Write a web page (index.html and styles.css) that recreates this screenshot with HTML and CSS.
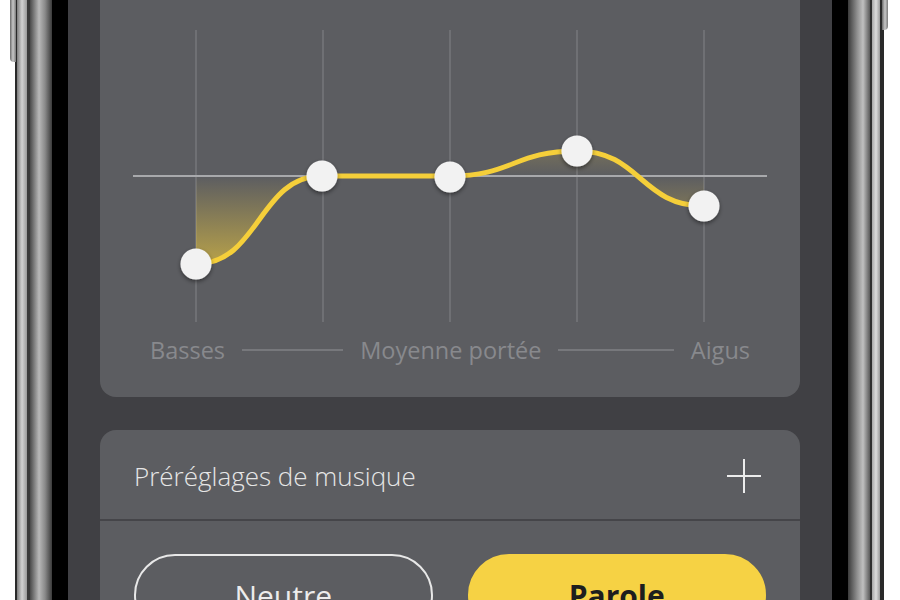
FILE: index.html
```html
<!DOCTYPE html>
<html lang="fr">
<head>
  <meta charset="UTF-8" />
  <meta name="viewport" content="width=device-width, initial-scale=1.0" />
  <title>Égaliseur</title>
  <link rel="stylesheet" href="styles.css">
</head>
<body>
  <div class="phone">
    <span class="side-btn side-left"></span>
    <span class="side-btn side-right"></span>
    <div class="screen">
      <!-- Egaliseur -->
      <div class="card eq-card">
        <svg class="eq-graph" width="700" height="330" viewBox="100 0 700 330">
          <defs>
            <linearGradient id="eqFill" gradientUnits="userSpaceOnUse" x1="0" y1="120" x2="0" y2="270">
              <stop offset="0" stop-color="#f5cf3a" stop-opacity="0.35" />
              <stop offset="0.373" stop-color="#f5cf3a" stop-opacity="0" />
              <stop offset="0.96" stop-color="#f5cf3a" stop-opacity="0.6" />
            </linearGradient>
            <filter id="knobShadow" x="-50%" y="-50%" width="200%" height="200%">
              <feDropShadow dx="0" dy="2" stdDeviation="2.2" flood-color="#000" flood-opacity="0.45" />
            </filter>
          </defs>
          <g stroke="#76777b" stroke-width="1.5">
            <line x1="196" y1="30" x2="196" y2="322" />
            <line x1="323" y1="30" x2="323" y2="322" />
            <line x1="450" y1="30" x2="450" y2="322" />
            <line x1="577" y1="30" x2="577" y2="322" />
            <line x1="704" y1="30" x2="704" y2="322" />
          </g>
          <line x1="133" y1="176" x2="767" y2="176" stroke="#a8a9ac" stroke-width="2" />
          <path d="M196,176 L196,264 C259,264 259,176 322,176 L450,176 C513,176 514,151 577,151 C640,151 641,206 704,206 L704,176 Z" fill="url(#eqFill)" />
          <path d="M196,264 C259,264 259,176 322,176 L450,176 C513,176 514,151 577,151 C640,151 641,206 704,206" fill="none" stroke="#f5cf3a" stroke-width="5" stroke-linecap="round" />
          <g fill="#f2f2f2" filter="url(#knobShadow)">
            <circle cx="196" cy="264" r="15.5" />
            <circle cx="322" cy="176" r="15.5" />
            <circle cx="450" cy="177" r="15.5" />
            <circle cx="577" cy="151" r="15.5" />
            <circle cx="704" cy="206" r="15.5" />
          </g>
        </svg>
        <div class="eq-labels">
          <span>Basses</span>
          <span class="eq-rule"></span>
          <span>Moyenne portée</span>
          <span class="eq-rule eq-rule-wide"></span>
          <span>Aigus</span>
        </div>
      </div>

      <!-- Préréglages -->
      <div class="card presets">
        <div class="presets-head">
          <span>Préréglages de musique</span>
          <svg class="plus" width="34" height="34" viewBox="0 0 34 34">
            <path d="M17 0 V34 M0 17 H34" stroke="#ececec" stroke-width="2" fill="none" />
          </svg>
        </div>
        <div class="presets-body">
          <button class="preset">Neutre</button>
          <button class="preset active">Parole</button>
        </div>
      </div>
    </div>
  </div>
</body>
</html>
```

FILE: styles.css
```css
* { box-sizing: border-box; }
html, body {
  height: 100%;
}
body {
  margin: 0;
  padding: 0 16px 0 15px;
  background: #fff;
  font-family: 'Open Sans', 'Noto Sans', sans-serif;
  overflow: hidden;
}
.phone {
  position: relative;
  height: 100%;
  padding: 0 36px 0 37px;
  background: linear-gradient(90deg,
    #2a2a2a 0px, #2a2a2a 2px,
    #7d7d7d 2px, #d2d2d2 7px, #9a9a9a 12px,
    #3a3a3a 12px, #3a3a3a 15px,
    #4a4a4a 15px, #b8b8b8 24px, #8a8a8a 30px, #3a3a3a 37px,
    #3a3a3a 833px, #8e8e8e 842px, #c0c0c0 848px, #5a5a5a 855px,
    #2e2e2e 855px, #2e2e2e 857px,
    #a6a6a6 857px, #dcdcdc 861px, #9a9a9a 865px,
    #2a2a2a 865px, #2a2a2a 869px);
}
.side-btn {
  position: absolute;
  top: 0;
  width: 6px;
  background: linear-gradient(90deg, #6a6a6a, #c8c8c8, #7a7a7a);
}
.side-left {
  left: -5px;
  height: 62px;
  border-radius: 0 0 0 4px;
}
.side-right {
  right: -4px;
  height: 30px;
  border-radius: 0 0 4px 0;
}
.screen {
  height: 100%;
  background: #404044;
  border-left: 16px solid #000;
  border-right: 16px solid #000;
  padding: 0 32px;
}
.card {
  background: #5c5d61;
  border-radius: 16px;
}
.eq-card {
  border-radius: 0 0 16px 16px;
  padding-bottom: 27px;
}
.eq-graph {
  display: block;
}
.eq-labels {
  display: flex;
  align-items: center;
  gap: 17px;
  padding: 0 50px;
  height: 40px;
  color: #88898d;
  font-size: 23.5px;
}
.eq-rule {
  flex: 100;
  height: 2px;
  background: #77787c;
}
.eq-rule-wide {
  flex: 114;
}
.presets {
  margin-top: 33px;
  overflow: hidden;
}
.presets-head {
  display: flex;
  align-items: center;
  justify-content: space-between;
  height: 91px;
  padding: 2px 39px 0 34px;
  border-bottom: 2px solid #454549;
  color: #e6e6e6;
  font-size: 26px;
  font-weight: 300;
}
.plus {
  display: block;
}
.presets-body {
  display: grid;
  grid-template-columns: 1fr 1fr;
  gap: 35px;
  padding: 33px 34px;
}
.preset {
  height: 82px;
  border-radius: 41px;
  border: 2px solid #e8e8e8;
  background: transparent;
  color: #ececec;
  font-family: inherit;
  font-size: 30px;
  padding: 0;
}
.preset.active {
  background: #f6d244;
  border-color: #f6d244;
  color: #1e1e1e;
  font-weight: 700;
}
```
